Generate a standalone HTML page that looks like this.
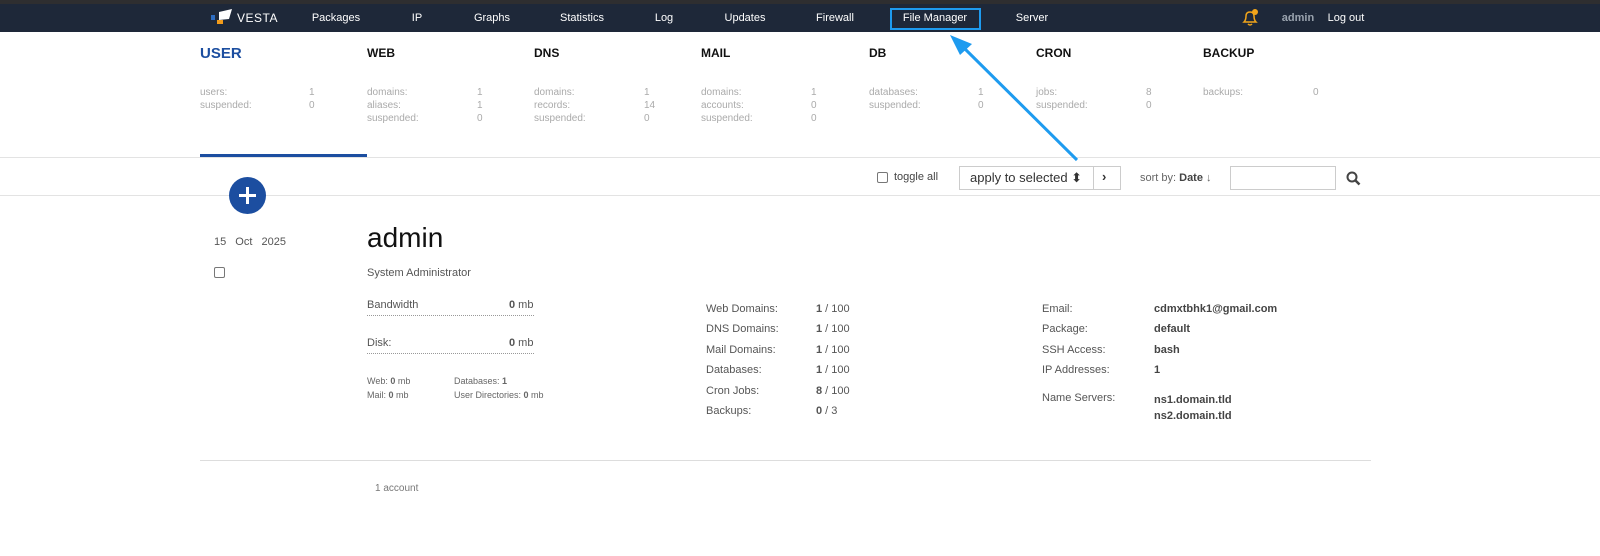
<!DOCTYPE html>
<html><head><style>
*{margin:0;padding:0;box-sizing:border-box}
body{width:1600px;height:556px;background:#fff;font-family:"Liberation Sans",Arial,sans-serif;position:relative;overflow:hidden;color:#333}
.a{position:absolute;white-space:nowrap}
.top{position:absolute;left:0;top:0;width:1600px;height:4px;background:#2e2e30}
.nav{position:absolute;left:0;top:4px;width:1600px;height:28px;background:#1e2839}
.n{position:absolute;top:12px;font-size:11px;color:#fff;transform:translateX(-50%)}
.h{font-size:12px;font-weight:bold;color:#111;top:46px}
.l{font-size:10px;color:#aaa}
.sv{font-size:10px;color:#aaa}
.g{font-size:11px;color:#555}
.b{font-size:11px;color:#444;font-weight:bold}
</style></head><body>
<div class="top"></div>
<div class="nav"></div>
<svg class="a" style="left:211px;top:9px" width="22" height="16" viewBox="0 0 22 16">
<rect x="0" y="6" width="4" height="5" fill="#2d6cc0"/>
<polygon points="8,3 21,0 18,10 8,11" fill="#fff"/>
<rect x="6" y="11" width="6" height="4" fill="#f29b1a"/>
</svg>
<div class="a" style="left:237px;top:11px;font-size:12px;color:#fff;letter-spacing:0.5px">VESTA</div>
<div class="n" style="left:336px">Packages</div>
<div class="n" style="left:417px">IP</div>
<div class="n" style="left:492px">Graphs</div>
<div class="n" style="left:582px">Statistics</div>
<div class="n" style="left:664px">Log</div>
<div class="n" style="left:745px">Updates</div>
<div class="n" style="left:835px">Firewall</div>
<div class="a" style="left:890px;top:8px;width:91px;height:22px;border:2px solid #1e9bef"></div>
<div class="n" style="left:935px">File Manager</div>
<div class="n" style="left:1032px">Server</div>
<svg class="a" style="left:1241px;top:8px" width="18" height="19" viewBox="0 0 18 19"><path d="M3 14 Q5 12 5 8 Q5 4 9 4 Q13 4 13 8 Q13 12 15 14 Z M7 16 Q9 18 11 16" fill="none" stroke="#f2a51a" stroke-width="1.5"/><circle cx="14" cy="4" r="3" fill="#f2a51a"/></svg>
<div class="n" style="left:1298px;color:#9aa3ae;font-weight:bold">admin</div>
<div class="n" style="left:1346px">Log out</div>

<div class="a" style="left:200px;top:45px;font-size:15px;font-weight:bold;color:#1c4ea0">USER</div>
<div class="a h" style="left:367px">WEB</div>
<div class="a h" style="left:534px">DNS</div>
<div class="a h" style="left:701px">MAIL</div>
<div class="a h" style="left:869px">DB</div>
<div class="a h" style="left:1036px">CRON</div>
<div class="a h" style="left:1203px">BACKUP</div>

<div class="a l" style="left:200px;top:86px;line-height:13px">users:<br>suspended:</div>
<div class="a sv" style="left:309px;top:86px;line-height:13px">1<br>0</div>
<div class="a l" style="left:367px;top:86px;line-height:13px">domains:<br>aliases:<br>suspended:</div>
<div class="a sv" style="left:477px;top:86px;line-height:13px">1<br>1<br>0</div>
<div class="a l" style="left:534px;top:86px;line-height:13px">domains:<br>records:<br>suspended:</div>
<div class="a sv" style="left:644px;top:86px;line-height:13px">1<br>14<br>0</div>
<div class="a l" style="left:701px;top:86px;line-height:13px">domains:<br>accounts:<br>suspended:</div>
<div class="a sv" style="left:811px;top:86px;line-height:13px">1<br>0<br>0</div>
<div class="a l" style="left:869px;top:86px;line-height:13px">databases:<br>suspended:</div>
<div class="a sv" style="left:978px;top:86px;line-height:13px">1<br>0</div>
<div class="a l" style="left:1036px;top:86px;line-height:13px">jobs:<br>suspended:</div>
<div class="a sv" style="left:1146px;top:86px;line-height:13px">8<br>0</div>
<div class="a l" style="left:1203px;top:86px;line-height:13px">backups:</div>
<div class="a sv" style="left:1313px;top:86px;line-height:13px">0</div>

<div class="a" style="left:0;top:157px;width:1600px;height:1px;background:#e3e3e3"></div>
<div class="a" style="left:200px;top:154px;width:167px;height:3px;background:#1c4ea0"></div>
<div class="a" style="left:0;top:195px;width:1600px;height:1px;background:#e3e3e3"></div>

<div class="a" style="left:877px;top:172px;width:11px;height:11px;border:1px solid #777;border-radius:2px"></div>
<div class="a" style="left:894px;top:171px;font-size:11px;color:#444">toggle all</div>
<div class="a" style="left:959px;top:166px;width:162px;height:24px;border:1px solid #ccc"></div>
<div class="a" style="left:1093px;top:166px;width:1px;height:24px;background:#ccc"></div>
<div class="a" style="left:970px;top:170px;font-size:13px;color:#333">apply to selected ⬍</div>
<div class="a" style="left:1102px;top:169px;font-size:13px;color:#333;font-weight:bold">›</div>
<div class="a" style="left:1140px;top:172px;font-size:11px;color:#666">sort by: <b style="color:#444">Date</b> ↓</div>
<div class="a" style="left:1230px;top:166px;width:106px;height:24px;border:1px solid #ccc"></div>
<svg class="a" style="left:1346px;top:171px" width="15" height="15" viewBox="0 0 15 15"><circle cx="6" cy="6" r="4.5" fill="none" stroke="#444" stroke-width="2"/><path d="M9.5 9.5 L13.5 13.5" stroke="#444" stroke-width="2.5"/></svg>

<div class="a" style="left:229px;top:177px;width:37px;height:37px;border-radius:50%;background:#1c4ea0"></div>
<div class="a" style="left:239px;top:194px;width:17px;height:3px;background:#fff"></div>
<div class="a" style="left:246px;top:187px;width:3px;height:17px;background:#fff"></div>

<div class="a" style="left:214px;top:236px;font-size:11px;color:#555;word-spacing:6px">15 Oct 2025</div>
<div class="a" style="left:214px;top:267px;width:11px;height:11px;border:1px solid #777;border-radius:2px"></div>

<div class="a" style="left:367px;top:222px;font-size:28px;color:#111">admin</div>
<div class="a g" style="left:367px;top:267px">System Administrator</div>
<div class="a g" style="left:367px;top:299px">Bandwidth</div>
<div class="a g" style="left:509px;top:299px"><b>0</b> mb</div>
<div class="a" style="left:367px;top:315px;width:167px;border-top:1px dotted #999"></div>
<div class="a g" style="left:367px;top:337px">Disk:</div>
<div class="a g" style="left:509px;top:337px"><b>0</b> mb</div>
<div class="a" style="left:367px;top:353px;width:167px;border-top:1px dotted #999"></div>
<div class="a" style="left:367px;top:374px;font-size:9px;color:#666;line-height:14px">Web: <b>0</b> mb<br>Mail: <b>0</b> mb</div>
<div class="a" style="left:454px;top:374px;font-size:9px;color:#666;line-height:14px">Databases: <b>1</b><br>User Directories: <b>0</b> mb</div>

<div class="a g" style="left:706px;top:299px;line-height:20.4px">Web Domains:<br>DNS Domains:<br>Mail Domains:<br>Databases:<br>Cron Jobs:<br>Backups:</div>
<div class="a g" style="left:816px;top:299px;line-height:20.4px"><b>1</b> / 100<br><b>1</b> / 100<br><b>1</b> / 100<br><b>1</b> / 100<br><b>8</b> / 100<br><b>0</b> / 3</div>

<div class="a g" style="left:1042px;top:299px;line-height:20.4px">Email:<br>Package:<br>SSH Access:<br>IP Addresses:</div>
<div class="a b" style="left:1154px;top:299px;line-height:20.4px">cdmxtbhk1@gmail.com<br>default<br>bash<br>1</div>
<div class="a g" style="left:1042px;top:392px">Name Servers:</div>
<div class="a b" style="left:1154px;top:392px;line-height:16px">ns1.domain.tld<br>ns2.domain.tld</div>

<div class="a" style="left:200px;top:460px;width:1171px;height:1px;background:#ddd"></div>
<div class="a" style="left:375px;top:483px;font-size:10px;color:#777">1 account</div>

<svg class="a" style="left:0;top:0" width="1600" height="556"><path d="M1077 160 L962 46" stroke="#1e9bef" stroke-width="3"/><polygon points="950,35 972,44 960,55" fill="#1e9bef"/></svg>
</body></html>
